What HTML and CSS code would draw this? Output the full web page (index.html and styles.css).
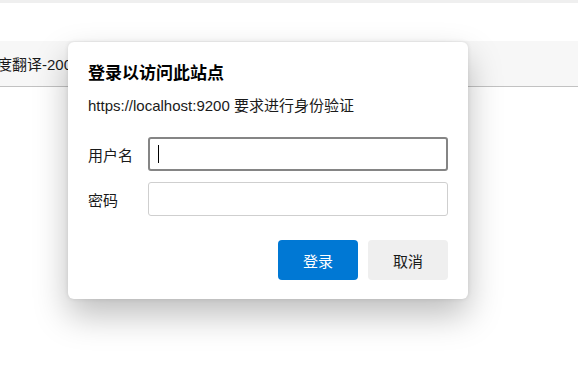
FILE: index.html
```html
<!DOCTYPE html>
<html lang="zh-CN">
<head>
    <meta charset="UTF-8">
    <meta name="viewport" content="width=device-width, initial-scale=1.0">
    <title>登录</title>
    <link rel="stylesheet" href="styles.css">
</head>
<body>

<div class="top-strip"></div>
<div class="address-bar"></div>
<div class="tab-bar">
    <span class="tab-title">度翻译-2000</span>
</div>
<div class="page"></div>

<!-- Auth dialog -->
<div class="dialog">
    <h2 class="dialog-title">登录以访问此站点</h2>
    <p class="dialog-sub">https://localhost:9200 要求进行身份验证</p>

    <div class="form">
        <label class="form-label" for="user">用户名</label>
        <div class="input-wrap">
            <input class="form-input focused" id="user" type="text">
            <span class="caret"></span>
        </div>
        <label class="form-label" for="pass">密码</label>
        <input class="form-input" id="pass" type="password">
    </div>

    <div class="actions">
        <button class="btn btn-primary">登录</button>
        <button class="btn btn-secondary">取消</button>
    </div>
</div>

</body>
</html>
```

FILE: styles.css
```css
/* Base */
body {
    margin: 0;
    padding: 0;
    font-family: "Liberation Sans", "Noto Sans CJK SC", sans-serif;
    background-color: #fff;
    color: #1a1a1a;
    overflow: hidden;
}

/* Browser chrome behind the dialog */
.top-strip {
    height: 3px;
    background-color: #efefef;
}

.address-bar {
    height: 38px;
    background-color: #fff;
}

.tab-bar {
    height: 45px;
    background-color: #f7f7f7;
    border-bottom: 1px solid #c2c2c2;
    display: flex;
    align-items: center;
}

.tab-title {
    font-size: 15px;
    color: #1a1a1a;
    margin-left: -3px;
}

.page {
    height: 300px;
    background-color: #fff;
}

/* Dialog */
.dialog {
    position: absolute;
    top: 42px;
    left: 68px;
    width: 360px;
    padding: 20px 20px 19px;
    background-color: #fff;
    border-radius: 6px;
    box-shadow: 0 16px 34px rgba(0, 0, 0, 0.26), 0 0 4px rgba(0, 0, 0, 0.1);
}

.dialog-title {
    margin: 0;
    font-size: 17px;
    line-height: 24px;
    font-weight: bold;
    color: #000;
}

.dialog-sub {
    margin: 10px 0 0;
    font-size: 15px;
    line-height: 20px;
    color: #1a1a1a;
}

.form {
    display: grid;
    grid-template-columns: 60px 300px;
    row-gap: 11px;
    align-items: center;
    margin-top: 21px;
}

.form-label {
    font-size: 15px;
    color: #1a1a1a;
}

.input-wrap {
    position: relative;
    height: 34px;
}

.caret {
    position: absolute;
    left: 10px;
    top: 8px;
    width: 1px;
    height: 18px;
    background-color: #000;
}

.form-input {
    box-sizing: border-box;
    width: 300px;
    height: 34px;
    margin: 0;
    padding: 0 10px;
    border: 1px solid #cfcfcf;
    border-radius: 3px;
    outline: none;
    font-size: 15px;
    display: block;
}

.form-input.focused {
    border: 2px solid #858585;
}

.actions {
    display: flex;
    justify-content: flex-end;
    gap: 10px;
    margin-top: 24px;
}

.btn {
    width: 80px;
    height: 40px;
    border: none;
    border-radius: 4px;
    font-family: "Liberation Sans", "Noto Sans CJK SC", sans-serif;
    font-size: 15px;
    cursor: pointer;
}

.btn-primary {
    background-color: #0078d4;
    color: #fff;
}

.btn-secondary {
    background-color: #efefef;
    color: #1a1a1a;
}
```
